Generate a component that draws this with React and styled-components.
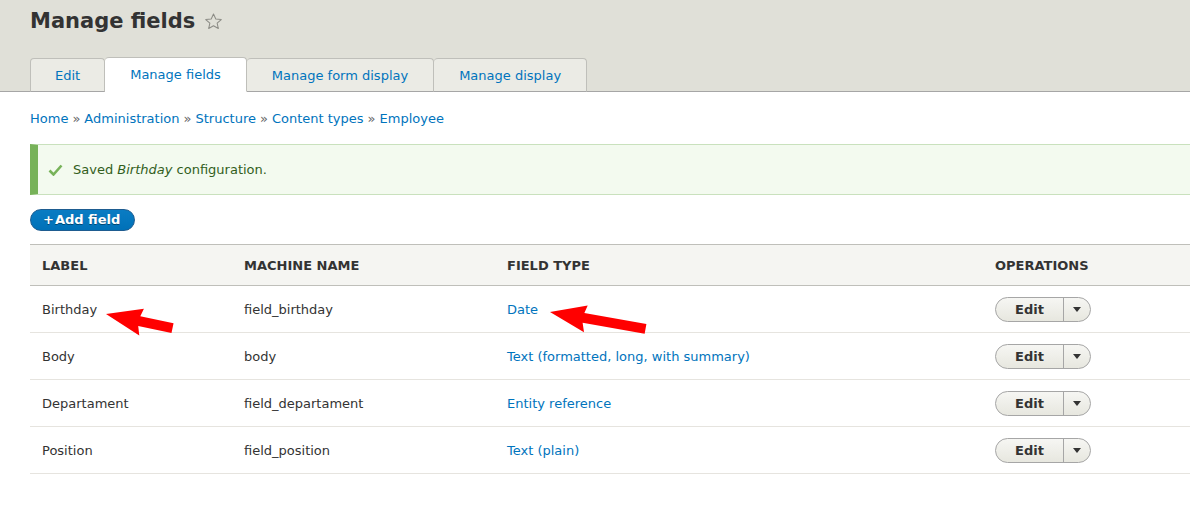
import React from "react";
import styled, { createGlobalStyle } from "styled-components";

const GlobalStyle = createGlobalStyle`
  html, body {
    margin: 0;
    padding: 0;
    background: #fff;
    overflow: hidden;
  }
  body {
    font-family: "DejaVu Sans", Verdana, sans-serif;
    font-size: 13px;
    color: #333;
  }
`;

const Page = styled.div`
  position: relative;
  width: 1190px;
  height: 508px;
  overflow: hidden;
`;

const Header = styled.div`
  background: #e0e0d8;
  border-bottom: 1px solid #a6a6a6;
  padding: 6px 0 0 30px;
  height: 85px;
  display: flex;
  flex-direction: column;
  justify-content: space-between;
`;

const TitleRow = styled.div`
  display: flex;
  align-items: center;
  gap: 9px;
`;

const Title = styled.h1`
  margin: 0;
  font-size: 21px;
  line-height: 30px;
  font-weight: bold;
  color: #333;
`;

const Tabs = styled.ul`
  display: flex;
  align-items: flex-end;
  list-style: none;
  margin: 0;
  padding: 0;
`;

const Tab = styled.li`
  height: ${(p) => (p.$active ? "35px" : "34px")};
  box-sizing: border-box;
  display: flex;
  align-items: center;
  padding: 0 ${(p) => (p.$first ? "24px" : "25px")};
  margin-bottom: -1px;
  background: ${(p) => (p.$active ? "#fff" : "#ebebe5")};
  border: 1px solid #bfbfba;
  border-bottom: ${(p) => (p.$active ? "1px solid #fff" : "1px solid #a6a6a6")};
  border-left-width: ${(p) => (p.$first ? "1px" : "0")};
  border-radius: 4px 4px 0 0;
  color: #0074bd;
  font-size: 13px;
`;

const Content = styled.div`
  padding: 0 0 0 30px;
  width: 1200px;
`;

const Breadcrumb = styled.div`
  display: flex;
  gap: 4px;
  padding-top: 19px;
  height: 33px;
  font-size: 13px;
  line-height: 16px;
  color: #0074bd;
`;

const Sep = styled.span`
  color: #666;
`;

const Message = styled.div`
  display: flex;
  align-items: center;
  gap: 10px;
  height: 49px;
  background: #f3faef;
  border: 1px solid #c9e1bd;
  border-left: 8px solid #77b259;
  padding-left: 10px;
  color: #325e1c;
  font-size: 13px;
`;

const AddButton = styled.button`
  margin: 14px 0 13px;
  height: 22px;
  padding: 0 14px 0 12px;
  border: 1px solid #1e5c90;
  border-radius: 20px;
  background: linear-gradient(#0a7cc3, #0071b8);
  color: #fff;
  font-family: "DejaVu Sans", Verdana, sans-serif;
  font-weight: bold;
  font-size: 13px;
  line-height: 18px;
  display: block;
  text-shadow: 0 1px rgba(0, 0, 0, 0.4);
`;

const Plus = styled.span`
  margin-right: 1px;
`;

const Table = styled.table`
  width: 100%;
  border-collapse: collapse;
  border-top: 1px solid #bfbfba;
`;

const Th = styled.th`
  text-align: left;
  background: #f5f5f2;
  height: 40px;
  padding: 0 12px;
  font-size: 13px;
  font-weight: bold;
  text-transform: uppercase;
  color: #333;
  border-bottom: 1px solid #bfbfba;
  width: ${(p) => p.$w || "auto"};
`;

const Td = styled.td`
  height: 46px;
  padding: 0 12px;
  border-bottom: 1px solid #e6e4df;
  font-size: 13px;
  color: ${(p) => (p.$link ? "#0074bd" : "#333")};
`;

const DropButton = styled.div`
  display: inline-flex;
  height: 25px;
  box-sizing: border-box;
  border: 1px solid #a6a6a6;
  border-radius: 13px;
  background: linear-gradient(#f6f6f3, #e7e7df);
  overflow: hidden;
`;

const DropMain = styled.span`
  width: 67px;
  display: flex;
  align-items: center;
  justify-content: center;
  font-weight: bold;
  font-size: 13px;
  color: #333;
  border-right: 1px solid #a6a6a6;
`;

const DropToggle = styled.span`
  width: 26px;
  display: flex;
  align-items: center;
  justify-content: center;
`;

const Overlay = styled.svg`
  position: absolute;
  left: 0;
  top: 0;
  pointer-events: none;
`;

const rows = [
  ["Birthday", "field_birthday", "Date"],
  ["Body", "body", "Text (formatted, long, with summary)"],
  ["Departament", "field_departament", "Entity reference"],
  ["Position", "field_position", "Text (plain)"],
];

function Arrow({ x, y, angle, length }) {
  const pts = `0,0 36,-13 34,-5 ${length},-5 ${length},5 34,5 37,14`;
  return (
    <polygon
      points={pts}
      fill="#ff0000"
      transform={`translate(${x} ${y}) rotate(${angle})`}
    />
  );
}

export default function App() {
  const crumbs = ["Home", "Administration", "Structure", "Content types", "Employee"];
  return (
    <Page>
      <GlobalStyle />
      <Header>
        <TitleRow>
          <Title>Manage fields</Title>
          <svg width="19" height="19" viewBox="0 0 24 24">
            <path
              d="M12 2.5l2.9 6.3 6.9.7-5.2 4.6 1.5 6.8L12 17.4l-6.1 3.5 1.5-6.8-5.2-4.6 6.9-.7z"
              fill="none"
              stroke="#8c8c86"
              strokeWidth="1.3"
              strokeLinejoin="round"
            />
          </svg>
        </TitleRow>
        <Tabs>
          <Tab $first>Edit</Tab>
          <Tab $active>Manage fields</Tab>
          <Tab>Manage form display</Tab>
          <Tab>Manage display</Tab>
        </Tabs>
      </Header>
      <Content>
        <Breadcrumb>
          {crumbs.map((c, i) => (
            <React.Fragment key={c}>
              {i > 0 && <Sep>»</Sep>}
              <span>{c}</span>
            </React.Fragment>
          ))}
        </Breadcrumb>
        <Message>
          <svg width="15" height="12" viewBox="0 0 15 12">
            <path d="M1.5 6.5l4 4L13.5 1.5" fill="none" stroke="#77b259" strokeWidth="2.6" />
          </svg>
          <span>
            Saved <em>Birthday</em> configuration.
          </span>
        </Message>
        <AddButton>
          <Plus>+</Plus>Add field
        </AddButton>
        <Table>
          <thead>
            <tr>
              <Th $w="178px">Label</Th>
              <Th $w="239px">Machine name</Th>
              <Th $w="464px">Field type</Th>
              <Th>Operations</Th>
            </tr>
          </thead>
          <tbody>
            {rows.map(([label, machine, type]) => (
              <tr key={machine}>
                <Td>{label}</Td>
                <Td>{machine}</Td>
                <Td $link>{type}</Td>
                <Td>
                  <DropButton>
                    <DropMain>Edit</DropMain>
                    <DropToggle>
                      <svg width="8" height="5" viewBox="0 0 8 5">
                        <path d="M0 0h8L4 5z" fill="#333" />
                      </svg>
                    </DropToggle>
                  </DropButton>
                </Td>
              </tr>
            ))}
          </tbody>
        </Table>
      </Content>
      <Overlay width="1190" height="508">
        <Arrow x={106} y={314} angle={12} length={68} />
        <Arrow x={550} y={312} angle={10} length={97} />
      </Overlay>
    </Page>
  );
}
